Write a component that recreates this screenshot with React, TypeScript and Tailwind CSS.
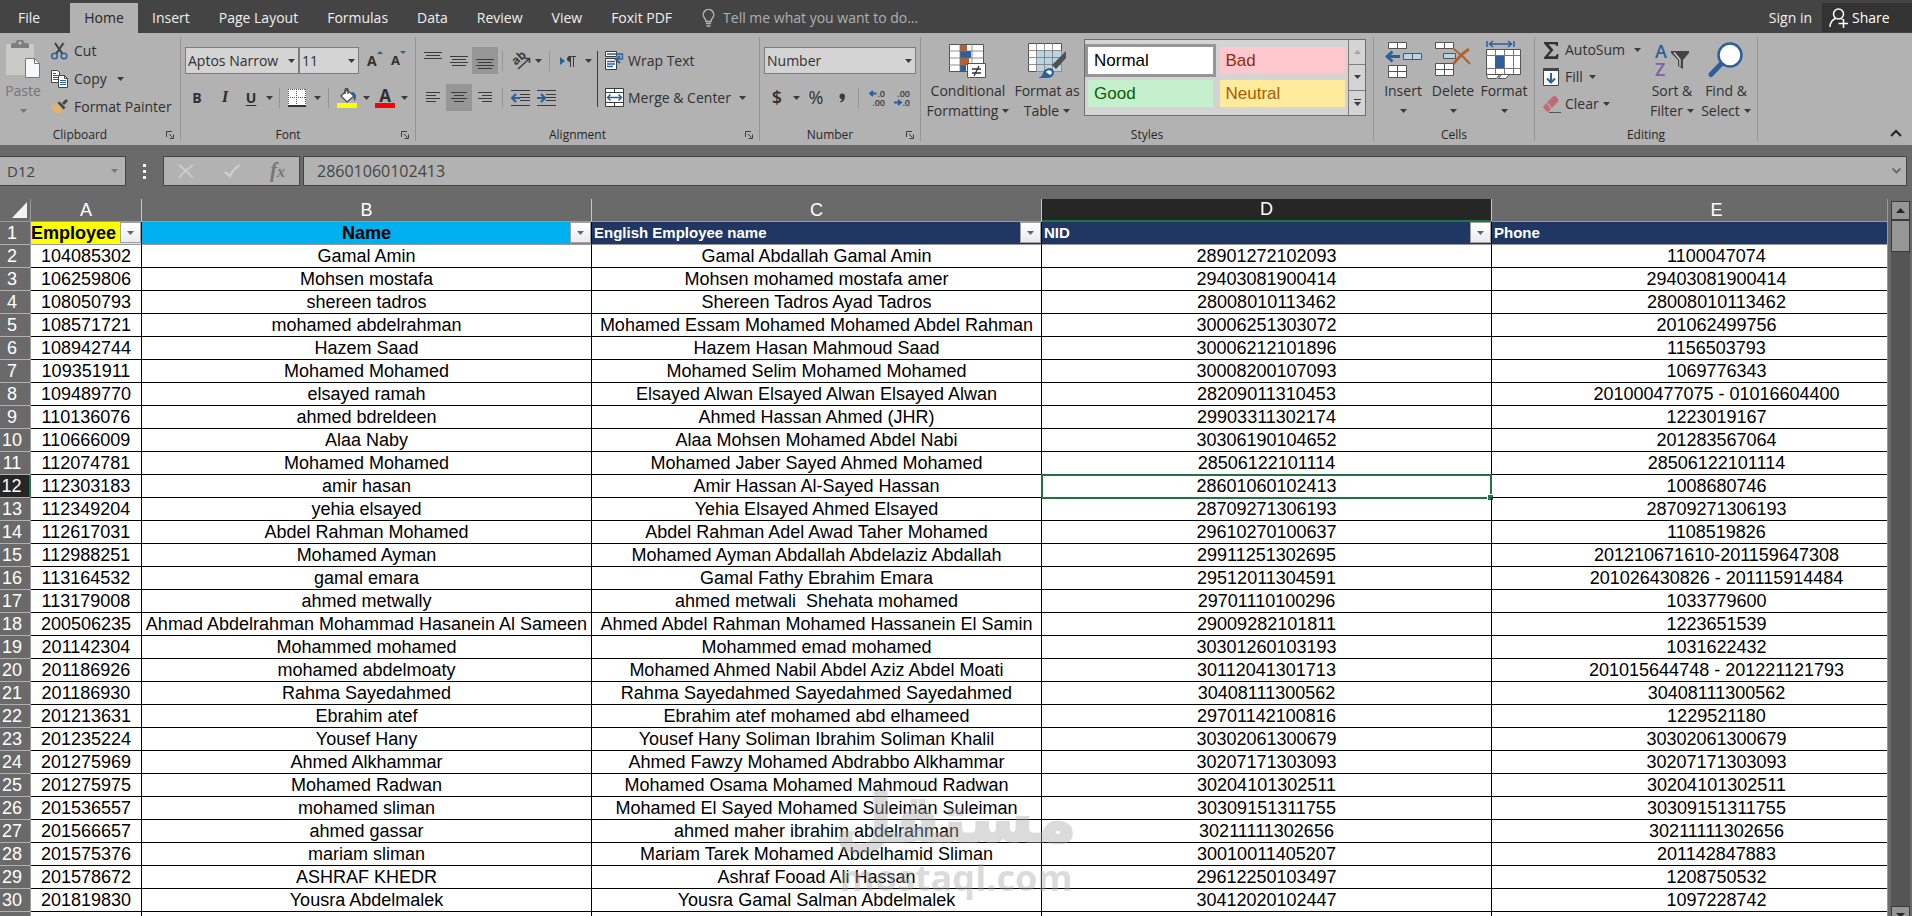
import React from "react";

type Row = [string, string, string, string, string];

const rows: Row[] = [
  ["104085302", "Gamal Amin", "Gamal Abdallah Gamal Amin", "28901272102093", "1100047074"],
  ["106259806", "Mohsen mostafa", "Mohsen mohamed mostafa amer", "29403081900414", "29403081900414"],
  ["108050793", "shereen tadros", "Shereen Tadros Ayad Tadros", "28008010113462", "28008010113462"],
  ["108571721", "mohamed abdelrahman", "Mohamed Essam Mohamed Mohamed Abdel Rahman", "30006251303072", "201062499756"],
  ["108942744", "Hazem Saad", "Hazem Hasan Mahmoud Saad", "30006212101896", "1156503793"],
  ["109351911", "Mohamed Mohamed", "Mohamed Selim Mohamed Mohamed", "30008200107093", "1069776343"],
  ["109489770", "elsayed ramah", "Elsayed Alwan Elsayed Alwan Elsayed Alwan", "28209011310453", "201000477075 - 01016604400"],
  ["110136076", "ahmed bdreldeen", "Ahmed Hassan Ahmed (JHR)", "29903311302174", "1223019167"],
  ["110666009", "Alaa Naby", "Alaa Mohsen Mohamed Abdel Nabi", "30306190104652", "201283567064"],
  ["112074781", "Mohamed Mohamed", "Mohamed Jaber Sayed Ahmed Mohamed", "28506122101114", "28506122101114"],
  ["112303183", "amir hasan", "Amir Hassan Al-Sayed Hassan", "28601060102413", "1008680746"],
  ["112349204", "yehia elsayed", "Yehia Elsayed Ahmed Elsayed", "28709271306193", "28709271306193"],
  ["112617031", "Abdel Rahman Mohamed", "Abdel Rahman Adel Awad Taher Mohamed", "29610270100637", "1108519826"],
  ["112988251", "Mohamed Ayman", "Mohamed Ayman Abdallah Abdelaziz Abdallah", "29911251302695", "201210671610-201159647308"],
  ["113164532", "gamal emara", "Gamal Fathy Ebrahim Emara", "29512011304591", "201026430826 - 201115914484"],
  ["113179008", "ahmed metwally", "ahmed metwali  Shehata mohamed", "29701110100296", "1033779600"],
  ["200506235", "Ahmad Abdelrahman Mohammad Hasanein Al Sameen", "Ahmed Abdel Rahman Mohamed Hassanein El Samin", "29009282101811", "1223651539"],
  ["201142304", "Mohammed mohamed", "Mohammed emad mohamed", "30301260103193", "1031622432"],
  ["201186926", "mohamed abdelmoaty", "Mohamed Ahmed Nabil Abdel Aziz Abdel Moati", "30112041301713", "201015644748 - 201221121793"],
  ["201186930", "Rahma Sayedahmed", "Rahma Sayedahmed Sayedahmed Sayedahmed", "30408111300562", "30408111300562"],
  ["201213631", "Ebrahim atef", "Ebrahim atef mohamed abd elhameed", "29701142100816", "1229521180"],
  ["201235224", "Yousef Hany", "Yousef Hany Soliman Ibrahim Soliman Khalil", "30302061300679", "30302061300679"],
  ["201275969", "Ahmed Alkhammar", "Ahmed Fawzy Mohamed Abdrabbo Alkhammar", "30207171303093", "30207171303093"],
  ["201275975", "Mohamed Radwan", "Mohamed Osama Mohamed Mahmoud Radwan", "30204101302511", "30204101302511"],
  ["201536557", "mohamed sliman", "Mohamed El Sayed Mohamed Suleiman Suleiman", "30309151311755", "30309151311755"],
  ["201566657", "ahmed gassar", "ahmed maher ibrahim abdelrahman", "30211111302656", "30211111302656"],
  ["201575376", "mariam sliman", "Mariam Tarek Mohamed Abdelhamid Sliman", "30010011405207", "201142847883"],
  ["201578672", "ASHRAF KHEDR", "Ashraf Fooad Ali Hassan", "29612250103497", "1208750532"],
  ["201819830", "Yousra Abdelmalek", "Yousra Gamal Salman Abdelmalek", "30412020102447", "1097228742"],
];

const BLUE = "#2b5f9e";

function Caret({ className = "text-[#3b3b3b]" }: { className?: string }) {
  return (
    <svg width="7" height="4" viewBox="0 0 7 4" className={"shrink-0 " + className} aria-hidden="true">
      <path d="M0 0h7L3.5 4z" fill="currentColor" />
    </svg>
  );
}

function DropButton({ label, className = "w-4" }: { label: string; className?: string }) {
  return (
    <button type="button" aria-label={label} className={"flex h-6 items-center justify-center " + className}>
      <Caret />
    </button>
  );
}

function Launcher({ label }: { label: string }) {
  return (
    <button type="button" aria-label={label} className="absolute right-1.5 flex size-2">
      <svg width="8" height="8" viewBox="0 0 8 8" fill="none" stroke="#3f3f3f" aria-hidden="true">
        <path d="M.5 6V.5H6M3 3l3.500 3.500M7.500 3.500v4h-4" />
      </svg>
    </button>
  );
}

function Group({
  name,
  width,
  launcher = true,
  children,
}: {
  name: string;
  width: string;
  launcher?: boolean;
  children: React.ReactNode;
}) {
  return (
    <>
      <section aria-label={name} className={"flex shrink-0 flex-col " + width}>
        <div className="h-[91px]">{children}</div>
        <div className={"relative flex h-[21px] items-center justify-center text-xs text-[#262626] " + (launcher ? "pr-5" : "")}>
          {name}
          {launcher && <Launcher label={name + " settings"} />}
        </div>
      </section>
      <div className="my-1 w-px shrink-0 bg-[#959595]" />
    </>
  );
}

function Sep() {
  return <div className="h-5 w-px bg-[#959595]" />;
}

function Lines({ ys, wide, narrow, shift }: { ys: number[]; wide: number; narrow: number; shift: number }) {
  const d = ys.map((y, i) => (i % 2 === 0 ? `M0 ${y}.5h${wide}` : `M${shift} ${y}.5h${narrow}`)).join("");
  return (
    <svg width={wide} height="18" viewBox={`0 0 ${wide} 18`} stroke="#3b3b3b" strokeWidth="1" aria-hidden="true">
      <path d={d} />
    </svg>
  );
}

function BigButton({
  icon,
  lines,
  width,
  muted = false,
}: {
  icon: React.ReactNode;
  lines: string[];
  width: string;
  muted?: boolean;
}) {
  const tone = muted ? "text-[#757575]" : "text-[#303030]";
  return (
    <button type="button" className={"flex shrink-0 flex-col items-center " + width + " " + tone}>
      <span className="flex h-12 items-end justify-center pb-0.5">{icon}</span>
      <span className="leading-5 whitespace-nowrap">{lines[0]}</span>
      <span className="flex h-5 items-center justify-center gap-1 leading-5 whitespace-nowrap">
        {lines[1]}
        <Caret className={muted ? "text-[#757575]" : "text-[#3b3b3b]"} />
      </span>
    </button>
  );
}

function Clipboard() {
  return (
    <Group name="Clipboard" width="w-[180px]">
      <div className="flex">
        <BigButton
          muted
          width="w-[46px]"
          lines={["Paste"]}
          icon={
            <svg width="36" height="40" viewBox="0 0 36 40" aria-hidden="true">
              <path d="M1 5h28v31H1z" fill="#c9c9c6" />
              <path d="M6 9V6q0-2 2-2h3V3q0-2 2-2h4q2 0 2 2v1h3q2 0 2 2v3z" fill="#7f7f7f" />
              <circle cx="15" cy="4" r="1.500" fill="#c9c9c6" />
              <path d="M20.500 19.500h9l5 5v14h-14z" fill="#f6f7f9" stroke="#777" />
              <path d="M29.500 19.500v5h5" fill="none" stroke="#777" />
            </svg>
          }
        />
        <div className="flex flex-col pt-1 pl-[5px]">
          <button type="button" className="flex h-7 items-center gap-1.5">
            <svg width="17" height="18" viewBox="0 0 17 18" fill="none" aria-hidden="true">
              <path d="M4 1l7.500 11M12.500 1L5 12" stroke="#444" strokeWidth="2.200" />
              <circle cx="3.500" cy="14" r="2.800" stroke={BLUE} strokeWidth="1.500" />
              <circle cx="13" cy="14" r="2.800" stroke={BLUE} strokeWidth="1.500" />
            </svg>
            Cut
          </button>
          <div className="flex h-7 items-center">
            <button type="button" className="flex items-center gap-1.5">
              <svg width="17" height="18" viewBox="0 0 17 18" aria-hidden="true">
                <path d="M.5.5h6l2 2v10h-8z" fill="#fff" stroke="#444" />
                <path d="M2 3.500h3M2 5.500h5M2 7.500h5M2 9.500h5" stroke={BLUE} />
                <path d="M7.500 5.500h6l3 3v9h-9z" fill="#fff" stroke="#444" />
                <path d="M13.500 5.500v3h3" fill="none" stroke="#444" />
                <path d="M9 10.500h6M9 12.500h6M9 14.500h6" stroke={BLUE} />
              </svg>
              Copy
            </button>
            <DropButton label="Copy options" className="ml-1 w-5" />
          </div>
          <button type="button" className="flex h-7 items-center gap-1.5 whitespace-nowrap">
            <svg width="17" height="16" viewBox="0 0 17 16" aria-hidden="true">
              <path d="M0 6l6-1 6 6-5 4q-5-2-7-9z" fill="#e2b36a" />
              <path d="M6.500 4l2-1.500 6 6-2 2zM11 4l4-4 2 2-4 4z" fill="#444" />
            </svg>
            Format Painter
          </button>
        </div>
      </div>
    </Group>
  );
}

function ComboBox({ label, value, width }: { label: string; value: string; width: string }) {
  return (
    <div className={"relative flex h-[27px] items-center " + width}>
      <select
        aria-label={label}
        defaultValue={value}
        className="h-full w-full appearance-none border border-[#7d7d7d] bg-[#d4d4d4] pl-0.5 text-[#303030]"
      >
        <option>{value}</option>
      </select>
      <span className="pointer-events-none absolute right-1">
        <Caret />
      </span>
    </div>
  );
}

function FontGroup() {
  return (
    <Group name="Font" width="w-[234px]">
      <div className="flex flex-col gap-2.5 pt-3.5 pl-1">
        <div className="flex h-[27px] items-center">
          <ComboBox label="Font name" value="Aptos Narrow" width="w-[114px]" />
          <ComboBox label="Font size" value="11" width="w-[60px]" />
          <button type="button" aria-label="Increase font size" className="ml-2 flex w-4 font-bold">
            A
            <svg width="6" height="4" viewBox="0 0 6 4" aria-hidden="true">
              <path d="M0 3h6L3 0z" fill={BLUE} />
            </svg>
          </button>
          <button type="button" aria-label="Decrease font size" className="ml-2 flex w-4 text-[13px] font-bold">
            A
            <svg width="6" height="4" viewBox="0 0 6 4" aria-hidden="true">
              <path d="M0 0h6L3 3z" fill={BLUE} />
            </svg>
          </button>
        </div>
        <div className="flex h-[27px] items-center">
          <button type="button" className="w-6 font-bold">B</button>
          <button type="button" className="ml-0.5 w-7 font-['Liberation_Serif',serif] text-[17px] font-bold italic">I</button>
          <button type="button" className="w-6 font-bold underline underline-offset-2">U</button>
          <DropButton label="Underline style" className="mr-1 w-3" />
          <Sep />
          <button type="button" aria-label="Borders" className="ml-2">
            <svg width="18" height="18" viewBox="0 0 18 18" shapeRendering="crispEdges" aria-hidden="true">
              <path d="M0 0h18v18H0z" fill="#fff" />
              <path d="M.5 0v17M8.500 0v17M17.500 0v17M0 .5h18M0 8.500h18" stroke="#555" strokeDasharray="1 1" />
              <path d="M0 17h18" stroke="#333" strokeWidth="2" />
            </svg>
          </button>
          <DropButton label="Border options" className="mx-1 w-3.5" />
          <Sep />
          <button type="button" aria-label="Fill color" className="ml-2">
            <svg width="20" height="20" viewBox="0 0 20 20" aria-hidden="true">
              <path d="M4 8l6-6 7 6-7 6z" fill="#fff" stroke="#444" strokeWidth="1.200" />
              <path d="M8 6V2q0-1.500 1.500-1.500T11 2v4" fill="none" stroke="#444" strokeWidth="1.300" />
              <path d="M14 4q5 0 5 5 0 3-2 4 0-4-3-9z" fill={BLUE} />
              <path d="M0 15h20v5H0z" fill="#ff0" />
            </svg>
          </button>
          <DropButton label="Fill color options" className="w-[18px]" />
          <button type="button" aria-label="Font color" className="flex w-5 flex-col items-center font-bold">
            <span className="text-[17px] leading-[15px]">A</span>
            <span className="h-[5px] w-5 bg-[#f00]" />
          </button>
          <DropButton label="Font color options" className="w-[18px]" />
        </div>
      </div>
    </Group>
  );
}

function AlignButton({ label, active = false, children }: { label: string; active?: boolean; children: React.ReactNode }) {
  return (
    <button
      type="button"
      aria-label={label}
      className={"flex h-[27px] w-[26px] items-center justify-center " + (active ? "bg-[#969696]" : "")}
    >
      {children}
    </button>
  );
}

function IndentIcon({ right = false }: { right?: boolean }) {
  return (
    <svg width="19" height="18" viewBox="0 0 19 18" fill="none" aria-hidden="true">
      <path d="M0 1.500h19M9 5.500h10M9 8.500h10M9 11.500h10M0 16.500h19" stroke="#3b3b3b" />
      <path d={right ? "M0 9h8M4 5l4 4-4 4" : "M1 9h8M5 5L1 9l4 4"} stroke={BLUE} strokeWidth="2.200" />
    </svg>
  );
}

function AlignmentGroup() {
  return (
    <Group name="Alignment" width="w-[343px]">
      <div className="flex pt-3.5">
        <div className="flex w-[181px] flex-col gap-2.5 pl-1">
          <div className="flex items-center">
            <AlignButton label="Top align"><Lines ys={[0, 3, 6]} wide={18} narrow={14} shift={2} /></AlignButton>
            <AlignButton label="Middle align"><Lines ys={[4, 7, 10, 13]} wide={18} narrow={14} shift={2} /></AlignButton>
            <AlignButton label="Bottom align" active><Lines ys={[7, 10, 13, 16]} wide={18} narrow={14} shift={2} /></AlignButton>
            <div className="w-1" />
            <Sep />
            <button type="button" aria-label="Orientation" className="ml-2">
              <svg width="20" height="18" viewBox="0 0 20 18" className="overflow-visible" aria-hidden="true">
                <text x="3" y="13" transform="rotate(-42 5 11)" fontFamily="Open Sans, sans-serif" fontSize="12" fontWeight="700" fill="#3b3b3b">ab</text>
                <path d="M7 17L18 7M13.500 6.500H18.500V11" fill="none" stroke="#3b3b3b" strokeWidth="1.500" />
              </svg>
            </button>
            <DropButton label="Orientation options" className="mr-1 w-3.5" />
            <Sep />
            <button type="button" aria-label="Text direction" className="ml-2.5">
              <svg width="16" height="14" viewBox="0 0 16 14" aria-hidden="true">
                <path d="M0 3v8l5-4z" fill={BLUE} />
                <path d="M10.500 2v11M13.500 2v11M8.500 2.500H16" stroke="#3b3b3b" fill="none" />
                <path d="M11 2v6q-4 0-4-3t4-3z" fill="#3b3b3b" />
              </svg>
            </button>
            <DropButton label="Text direction options" className="ml-1 w-4" />
          </div>
          <div className="flex items-center">
            <AlignButton label="Align left"><Lines ys={[3, 6, 9, 12]} wide={14} narrow={10} shift={0} /></AlignButton>
            <AlignButton label="Center" active><Lines ys={[3, 6, 9, 12]} wide={16} narrow={10} shift={3} /></AlignButton>
            <AlignButton label="Align right"><Lines ys={[3, 6, 9, 12]} wide={14} narrow={10} shift={4} /></AlignButton>
            <div className="w-1" />
            <Sep />
            <button type="button" aria-label="Decrease indent" className="ml-2"><IndentIcon /></button>
            <button type="button" aria-label="Increase indent" className="ml-[7px]"><IndentIcon right /></button>
          </div>
        </div>
        <div className="mt-1 h-14 w-px bg-[#3b3b3b]" />
        <div className="flex flex-col gap-2.5 pl-[7px]">
          <button type="button" className="flex h-[27px] items-center gap-1">
            <svg width="19" height="19" viewBox="0 0 19 19" fill="none" aria-hidden="true">
              <path d="M.5.5h11v5H.5zM.5 7.500h11v11H.5z" fill="#fff" stroke="#3b3b3b" />
              <path d="M2 3h15.500v5H12M2 10.500h8M2 13h8M2 15.500h6" stroke={BLUE} strokeWidth="1.300" />
              <path d="M15 5L11 8.500l4 3.500" stroke={BLUE} strokeWidth="2" />
            </svg>
            Wrap Text
          </button>
          <div className="flex h-[27px] items-center">
            <button type="button" className="flex items-center gap-1 whitespace-nowrap">
              <svg width="19" height="19" viewBox="0 0 19 19" fill="none" aria-hidden="true">
                <path d="M.5.5h18v18H.5z" fill="#fff" stroke="#3b3b3b" />
                <path d="M0 4.500h19M0 14.500h19M9.500 0v4M9.500 15v4" stroke="#3b3b3b" />
                <path d="M3 9.500h13M5.500 6.500l-3 3 3 3M13.500 6.500l3 3-3 3" stroke={BLUE} strokeWidth="1.500" />
              </svg>
              Merge &amp; Center
            </button>
            <DropButton label="Merge options" className="ml-1 w-4" />
          </div>
        </div>
      </div>
    </Group>
  );
}

function DecimalIcon({ top, bottom, decrease = false }: { top: string; bottom: string; decrease?: boolean }) {
  return (
    <svg width="17" height="18" viewBox="0 0 17 18" fill="none" className="overflow-visible" aria-hidden="true">
      <text x="16" y="8" textAnchor="end" fontFamily="Open Sans, sans-serif" fontSize="9" fontWeight="600" fill="#3b3b3b">{top}</text>
      <text x="16" y="17" textAnchor="end" fontFamily="Open Sans, sans-serif" fontSize="9" fontWeight="600" fill="#3b3b3b">{bottom}</text>
      <path d={decrease ? "M0 13.500h6M4 11l3 2.500L4 16" : "M1.500 4.500h6M4 2L1 4.500 4 7"} stroke={BLUE} strokeWidth="1.800" />
    </svg>
  );
}

function NumberGroup() {
  return (
    <Group name="Number" width="w-[160px]">
      <div className="flex flex-col gap-2.5 pt-3.5 pl-1">
        <ComboBox label="Number format" value="Number" width="w-[152px]" />
        <div className="flex h-[27px] items-center">
          <button type="button" className="w-[26px] text-[18px] font-semibold">$</button>
          <DropButton label="Accounting format options" className="w-3" />
          <button type="button" className="ml-1 w-5 text-[18px]">%</button>
          <button type="button" aria-label="Comma style" className="flex w-8 items-center justify-center">
            <svg width="7" height="10" viewBox="0 0 7 10" aria-hidden="true">
              <path d="M6 3q0 5-4 6.500L1 8.500Q3 7.500 3 6 .5 6 .5 3.200.5.5 3.200.5T6 3z" fill="#3b3b3b" />
            </svg>
          </button>
          <Sep />
          <button type="button" aria-label="Increase decimal" className="ml-2.5"><DecimalIcon top=".0" bottom=".00" /></button>
          <button type="button" aria-label="Decrease decimal" className="ml-2"><DecimalIcon top=".00" bottom=".0" decrease /></button>
        </div>
      </div>
    </Group>
  );
}

function StyleCell({ name, tone }: { name: string; tone: string }) {
  return (
    <button
      type="button"
      className={"h-[33px] w-[131px] border-3 pl-1.5 text-left font-['Liberation_Sans',Arial,sans-serif] text-[17px] leading-6 " + tone}
    >
      {name}
    </button>
  );
}

function StylesGroup() {
  return (
    <Group name="Styles" width="w-[452px]" launcher={false}>
      <div className="flex">
        <BigButton
          width="w-[94px]"
          lines={["Conditional", "Formatting"]}
          icon={
            <svg width="38" height="35" viewBox="0 0 38 35" aria-hidden="true">
              <path d="M.5.5h34v27H.5z" fill="#fff" stroke="#555" />
              <path d="M11 1h7v6h-7zM11 14h9v7h-9z" fill="#b5622a" />
              <path d="M11 7h11v7H11zM11 21h6v6h-6z" fill={BLUE} />
              <path d="M11 0v27M23 0v27M0 7h34M0 14h34M0 21h34" stroke="#777" strokeWidth=".8" />
              <path d="M18.500 19.500h18v14h-18z" fill="#fff" stroke="#555" />
              <path d="M23 25h9M23 29h9M30 22l-5 10" stroke="#333" strokeWidth="1.300" />
            </svg>
          }
        />
        <BigButton
          width="w-[64px]"
          lines={["Format as", "Table"]}
          icon={
            <svg width="38" height="36" viewBox="0 0 38 36" aria-hidden="true">
              <path d="M.5.5h33v28H.5z" fill="#fff" stroke="#555" />
              <path d="M8.500 7.500h25v21h-25z" fill="#b9d4e2" />
              <path d="M8.500 0v28M16.500 0v28M24.500 0v28M0 7.500h33M0 14.500h33M0 21.500h33" stroke="#777" strokeWidth=".8" />
              <path d="M38 8v7L28 26l-4-4z" fill="#505050" />
              <path d="M10 35q4-1 5-5t6-5q5 0 5 5-1 5-7 5z" fill={BLUE} />
              <path d="M18 29q2-3 5-1 2 2-1 4" fill="#fff" />
            </svg>
          }
        />
        <div className="mt-1.5 ml-[5px] flex h-[77px] w-[282px] border border-[#6d6d6d] bg-[#d4d4d4]">
          <div className="grid flex-1 grid-cols-2 content-start pt-1">
            <StyleCell name="Normal" tone="border-[#969696] bg-white text-black" />
            <StyleCell name="Bad" tone="border-[#d4d4d4] bg-[#ffc7ce] text-[#8c2f0c]" />
            <StyleCell name="Good" tone="border-[#d4d4d4] bg-[#c6efce] text-[#075d00]" />
            <StyleCell name="Neutral" tone="border-[#d4d4d4] bg-[#ffeb9c] text-[#a85b08]" />
          </div>
          <div className="flex w-[17px] flex-col divide-y divide-[#7d7d7d] border-l border-[#7d7d7d]">
            <button type="button" aria-label="Previous styles" className="flex flex-1 items-center justify-center">
              <span className="rotate-180"><Caret className="text-[#a5a5a5]" /></span>
            </button>
            <button type="button" aria-label="Next styles" className="flex flex-1 items-center justify-center"><Caret /></button>
            <button type="button" aria-label="More styles" className="flex flex-1 flex-col items-center justify-center gap-0.5">
              <span className="h-px w-[7px] bg-[#3b3b3b]" />
              <Caret />
            </button>
          </div>
        </div>
      </div>
    </Group>
  );
}

function CellsGroup() {
  return (
    <Group name="Cells" width="w-[160px]" launcher={false}>
      <div className="flex pl-[5px]">
        <BigButton
          width="w-12"
          lines={["Insert"]}
          icon={
            <svg width="37" height="38" viewBox="0 0 37 38" fill="none" aria-hidden="true">
              <path d="M3.500 1.500h18v6h-18zM3.500 24.500h18v12h-18z" fill="#fff" stroke="#555" />
              <path d="M12.500 1v6M12.500 24v12M3 30.500h18" stroke="#555" />
              <path d="M18.500 12.500h18v6h-18z" fill="#b9d4e2" stroke="#555" />
              <path d="M27.500 12v6" stroke="#555" />
              <path d="M2 15.500h13M7.500 10.500l-5.500 5 5.500 5" stroke={BLUE} strokeWidth="2.800" />
            </svg>
          }
        />
        <BigButton
          width="w-[52px]"
          lines={["Delete"]}
          icon={
            <svg width="36" height="38" viewBox="0 0 36 38" fill="none" aria-hidden="true">
              <path d="M.5 1.500h18v6H.5zM.5 22.500h18v12H.5z" fill="#fff" stroke="#555" />
              <path d="M9.500 1v6M9.500 22v12M0 28.500h18" stroke="#555" />
              <path d="M8.500 12.500h12v5h-12z" fill="#b9d4e2" stroke="#555" />
              <path d="M19 8q9 7 16 15" stroke="#b5622a" strokeWidth="2.200" />
              <path d="M34 8q-9 6-15.500 15" stroke="#b5622a" strokeWidth="2.800" />
            </svg>
          }
        />
        <BigButton
          width="w-[50px]"
          lines={["Format"]}
          icon={
            <svg width="36" height="39" viewBox="0 0 36 39" fill="none" aria-hidden="true">
              <path d="M1 1v6M28 1v6M3 4h23M7 1L3.500 4 7 7M22 1l3.500 3L22 7" stroke={BLUE} strokeWidth="1.500" />
              <path d="M.5 9.500h34v25H.5z" fill="#fff" stroke="#555" />
              <path d="M9.500 10v24M18.500 10v24M27.500 10v24M0 15.500h34M0 28.500h34" stroke="#777" />
              <path d="M9 16h9v12H9z" fill={BLUE} />
              <path d="M.5 34.500h23l-4 4h-7l3-4h-2l-3 4h-9z" fill="#fff" stroke="#555" />
            </svg>
          }
        />
      </div>
    </Group>
  );
}

function EditingGroup() {
  return (
    <Group name="Editing" width="w-[222px]" launcher={false}>
      <div className="flex pl-2">
        <div className="flex w-[105px] flex-col pt-[3px]">
          <div className="flex h-7 items-center">
            <button type="button" className="flex items-center gap-1.5">
              <svg width="16" height="17" viewBox="0 0 16 17" aria-hidden="true">
                <path d="M1 0h14v4h-1.500L12 2.200H5.500L10.500 8 5 14.300h7.500L14 12h1.500l-.5 5H1v-1.500L7 8.500 1 1.500z" fill="#333" />
              </svg>
              AutoSum
            </button>
            <DropButton label="AutoSum options" className="ml-1 w-4" />
          </div>
          <button type="button" className="flex h-[26px] items-center gap-1.5">
            <svg width="16" height="18" viewBox="0 0 16 18" fill="none" aria-hidden="true">
              <path d="M.5.5h15v17H.5z" fill="#fff" stroke="#444" />
              <path d="M0 1.500h16" stroke="#444" strokeWidth="3" />
              <path d="M8 5v9M4 10.500l4 4 4-4" stroke={BLUE} strokeWidth="2" />
            </svg>
            Fill
            <Caret />
          </button>
          <button type="button" className="flex h-7 items-center gap-1">
            <svg width="18" height="18" viewBox="0 0 18 18" aria-hidden="true">
              <path d="M10 1.500q1.500-1 3 0l2 2.500q1 1 0 2.500L9 13 4 7z" fill="#c06a74" />
              <path d="M3.200 8L8 13.800l-2 2.700H3.500L0 12z" fill="#c06a74" />
              <path d="M6 17.500h12" stroke="#555" />
            </svg>
            Clear
            <Caret />
          </button>
        </div>
        <BigButton
          width="w-[48px]"
          lines={["Sort &", "Filter"]}
          icon={
            <svg width="36" height="36" viewBox="0 0 36 36" className="overflow-visible" aria-hidden="true">
              <text x="1" y="15" fontFamily="Open Sans, sans-serif" fontSize="18" fontWeight="600" fill={BLUE}>A</text>
              <text x="1" y="33" fontFamily="Open Sans, sans-serif" fontSize="18" fontWeight="600" fill="#7b5fa8">Z</text>
              <path d="M17 8h18v2l-6 7v9l-5-3v-6l-7-7z" fill="#444" />
              <path d="M20 9.500l6 7v7" stroke="#ddd" fill="none" strokeWidth="1.200" />
            </svg>
          }
        />
        <BigButton
          width="w-[60px]"
          lines={["Find &", "Select"]}
          icon={
            <svg width="36" height="38" viewBox="0 0 36 38" fill="none" aria-hidden="true">
              <path d="M14 22L3 33.500" stroke={BLUE} strokeWidth="5" strokeLinecap="round" />
              <circle cx="22" cy="14" r="11.500" fill="#fff" stroke={BLUE} strokeWidth="2.500" />
            </svg>
          }
        />
      </div>
    </Group>
  );
}

function TabBar() {
  const tabs = ["Insert", "Page Layout", "Formulas", "Data", "Review", "View", "Foxit PDF"];
  return (
    <nav aria-label="Ribbon tabs" className="flex h-[33px] items-stretch bg-[#444444] pt-[3px] text-[#f0f0f0]">
      <button type="button" className="w-[70px] pr-10 pl-[18px]">File</button>
      <button type="button" aria-current="page" className="w-[68px] bg-[#b2b2b2] text-[#262626]">Home</button>
      <div className="flex gap-px">
        {tabs.map((tab) => (
          <button key={tab} type="button" className="px-3.5 whitespace-nowrap">{tab}</button>
        ))}
      </div>
      <label className="ml-4 flex flex-1 items-center gap-2 text-[#b0b0b0]">
        <svg width="13" height="18" viewBox="0 0 13 18" fill="none" stroke="#b0b0b0" strokeWidth="1.500" aria-hidden="true">
          <path d="M4 12.500Q4 10.500 2.500 9A5.200 5.200 0 1 1 10.500 9Q9 10.500 9 12.500zM4 14.500h5M4.500 17h4" />
        </svg>
        <input
          aria-label="Tell me what you want to do"
          placeholder="Tell me what you want to do..."
          className="w-60 bg-transparent outline-none placeholder:text-[#b0b0b0]"
        />
      </label>
      <button type="button" className="px-2.5">Sign in</button>
      <button type="button" className="mb-px flex w-[90px] items-center gap-1 bg-[#333333] pl-[7px] text-white">
        <svg width="19" height="20" viewBox="0 0 19 20" fill="none" stroke="#fff" strokeWidth="1.500" aria-hidden="true">
          <circle cx="9.500" cy="6" r="5" />
          <path d="M1 19q0-6 5.500-8.500M12 10.500l1.500 1M9.500 15.500H19M14.500 11v9" />
        </svg>
        Share
      </button>
    </nav>
  );
}

function FormulaBar() {
  return (
    <div className="flex h-[54px] shrink-0 items-center pr-[5px] pb-0.5 text-[#444]">
      <div className="relative flex h-[30px] w-[126px] items-center">
        <input
          aria-label="Name box"
          defaultValue="D12"
          className="h-full w-full border border-l-0 border-[#444] bg-[#b2b2b2] pl-[7px] text-[15px]"
        />
        <button type="button" aria-label="Name box options" className="absolute right-2 flex">
          <Caret className="text-[#777]" />
        </button>
      </div>
      <div className="flex w-[37px] justify-center">
        <svg width="3" height="15" viewBox="0 0 3 15" fill="#fff" aria-hidden="true">
          <path d="M0 0h3v3H0zM0 6h3v3H0zM0 12h3v3H0z" />
        </svg>
      </div>
      <div className="mr-[3px] flex h-[30px] w-[137px] items-center justify-between border border-[#444] bg-[#b2b2b2] px-3.5">
        <button type="button" aria-label="Cancel">
          <svg width="16" height="15" viewBox="0 0 16 15" fill="none" stroke="#cdcdcd" strokeWidth="1.800" aria-hidden="true">
            <path d="M1 1q8 6 14 13M15 1Q7 6 1 14" />
          </svg>
        </button>
        <button type="button" aria-label="Enter">
          <svg width="17" height="14" viewBox="0 0 17 14" fill="none" stroke="#cdcdcd" strokeWidth="2.500" aria-hidden="true">
            <path d="M1 8l5 4Q10 4 16 1" />
          </svg>
        </button>
        <button type="button" aria-label="Insert function" className="font-['Liberation_Serif',serif] text-[21px] leading-6 font-bold text-[#777] italic">
          f<span className="text-[16px]">x</span>
        </button>
      </div>
      <div className="relative flex h-[30px] flex-1 items-center">
        <input
          aria-label="Formula"
          defaultValue="28601060102413"
          className="h-full w-full border border-[#444] bg-[#b2b2b2] pl-[13px] text-base"
        />
        <button type="button" aria-label="Expand formula bar" className="absolute right-1.5">
          <svg width="9" height="6" viewBox="0 0 9 6" fill="none" stroke="#666" strokeWidth="1.800" aria-hidden="true">
            <path d="M.5.5l4 4 4-4" />
          </svg>
        </button>
      </div>
    </div>
  );
}

function FilterButton({ label }: { label: string }) {
  return (
    <button
      type="button"
      aria-label={"Filter " + label}
      className="absolute top-0 right-0 flex h-[21px] w-[21px] items-center justify-center border border-[#a0a0a0] bg-linear-to-b from-white to-[#e8ebef]"
    >
      <Caret className="text-[#666]" />
    </button>
  );
}

const fields = [
  { name: "Employee", tone: "bg-[#ffff00] text-left text-black", filter: true },
  { name: "Name", tone: "bg-[#00b0f0] text-center text-black", filter: true },
  { name: "English Employee name", tone: "bg-[#203764] pl-0.5 text-left text-[15px] text-white", filter: true },
  { name: "NID", tone: "bg-[#203764] pl-0.5 text-left text-[15px] text-white", filter: true },
  { name: "Phone", tone: "bg-[#203764] pl-0.5 text-left text-[15px] text-white", filter: false },
];

function RowHeader({ n }: { n: number }) {
  const tone =
    n === 12
      ? "border-r-2 border-r-[#217346] bg-[#262626]"
      : "border-r border-r-[#9a9a9a] bg-[#6a6a6a]";
  return (
    <th scope="row" className={"border-b border-b-[#b0b0b0] py-0 pr-1.5 pl-0 text-center font-normal text-white " + tone}>
      {n}
    </th>
  );
}

function Sheet() {
  return (
    <div className="relative min-w-0 flex-1 overflow-hidden border-r border-[#9a9a9a] font-['Liberation_Sans',Arial,sans-serif]">
      <table className="w-[1942px] table-fixed border-separate border-spacing-0 bg-white text-[18px] leading-[22px] whitespace-pre text-black">
        <colgroup>
          <col className="w-[31px]" />
          <col className="w-[111px]" />
          <col className="w-[450px]" />
          <col className="w-[450px]" />
          <col className="w-[450px]" />
          <col className="w-[450px]" />
        </colgroup>
        <thead>
          <tr className="h-[23px] bg-[#6a6a6a] text-white">
            <td className="border-r border-b border-[#9a9a9a] p-0">
              <svg width="15" height="16" viewBox="0 0 15 16" className="ml-3" aria-hidden="true">
                <path d="M15 0v16H0z" fill="#f2f2f2" />
              </svg>
            </td>
            {["A", "B", "C", "D", "E"].map((c) => (
              <th
                key={c}
                scope="col"
                className={
                  "border-r border-r-[#c8c8c8] p-0 font-normal " +
                  (c === "D" ? "border-b-2 border-b-[#217346] bg-[#262626] leading-[21px]" : "border-b border-b-[#9a9a9a]")
                }
              >
                {c}
              </th>
            ))}
          </tr>
        </thead>
        <tbody>
          <tr className="h-[23px]">
            <RowHeader n={1} />
            {fields.map((f) => (
              <td key={f.name} className={"relative border-r border-b border-r-black border-b-[#9a9a9a] py-0 pr-0 font-bold " + f.tone}>
                {f.name}
                {f.filter && <FilterButton label={f.name} />}
              </td>
            ))}
          </tr>
          {rows.map((row, i) => (
            <tr key={row[0]} className="h-[23px]">
              <RowHeader n={i + 2} />
              {row.map((cell, j) => (
                <td key={j} className="relative border-r border-b border-black p-0 text-center">
                  {cell}
                  {i === 10 && j === 3 && (
                    <span className="absolute -inset-x-px -top-px -bottom-[2px] border-2 border-[#217346]">
                      <span className="absolute -right-[3px] -bottom-[3px] size-[6px] border-t border-l border-white bg-[#217346]" />
                    </span>
                  )}
                </td>
              ))}
            </tr>
          ))}
          <tr className="h-[23px]">
            <RowHeader n={31} />
            {fields.map((f) => (
              <td key={f.name} className="border-r border-b border-black p-0" />
            ))}
          </tr>
        </tbody>
      </table>
      <div className="pointer-events-none absolute bottom-4 left-[840px] flex w-[232px] flex-col items-center text-[#a8a8a8] opacity-40">
        <span lang="ar" dir="rtl" className="font-['DejaVu_Sans',sans-serif] text-[66px] leading-[72px] font-bold [-webkit-text-stroke:2px]">مستقل</span>
        <span className="font-['Open_Sans',sans-serif] text-[36px] leading-[44px] font-bold">mostaql.com</span>
      </div>
    </div>
  );
}

function ScrollBar() {
  return (
    <div className="flex w-6 shrink-0 flex-col pt-0.5 pr-0.5 pl-[3px]">
      <div className="flex flex-1 flex-col bg-[#555]">
        <button type="button" aria-label="Scroll up" className="flex h-[19px] items-center justify-center border border-[#3b3b3b] bg-[#969696]">
          <svg width="9" height="5" viewBox="0 0 9 5" aria-hidden="true"><path d="M0 5h9L4.500 0z" fill="#262626" /></svg>
        </button>
        <div className="h-8 border border-[#3b3b3b] bg-[#969696]" />
        <div className="flex-1" />
        <button type="button" aria-label="Scroll down" className="flex h-2.5 items-end justify-center border border-b-0 border-[#3b3b3b] bg-[#969696]">
          <svg width="9" height="3" viewBox="0 0 9 3" aria-hidden="true"><path d="M0 0h9L6 3H3z" fill="#262626" /></svg>
        </button>
      </div>
    </div>
  );
}

export default function App() {
  return (
    <div className="flex h-screen flex-col overflow-hidden bg-[#6a6a6a] font-['Open_Sans','Noto_Sans',sans-serif] text-sm text-[#303030]">
      <TabBar />
      <div className="flex h-28 shrink-0 bg-[#b2b2b2]">
        <Clipboard />
        <FontGroup />
        <AlignmentGroup />
        <NumberGroup />
        <StylesGroup />
        <CellsGroup />
        <EditingGroup />
        <div className="flex flex-1 items-end justify-end pr-2.5 pb-2">
          <button type="button" aria-label="Collapse ribbon">
            <svg width="12" height="8" viewBox="0 0 12 8" fill="none" stroke="#262626" strokeWidth="2" aria-hidden="true">
              <path d="M1 7l5-5 5 5" />
            </svg>
          </button>
        </div>
      </div>
      <FormulaBar />
      <div className="flex min-h-0 flex-1">
        <Sheet />
        <ScrollBar />
      </div>
    </div>
  );
}
